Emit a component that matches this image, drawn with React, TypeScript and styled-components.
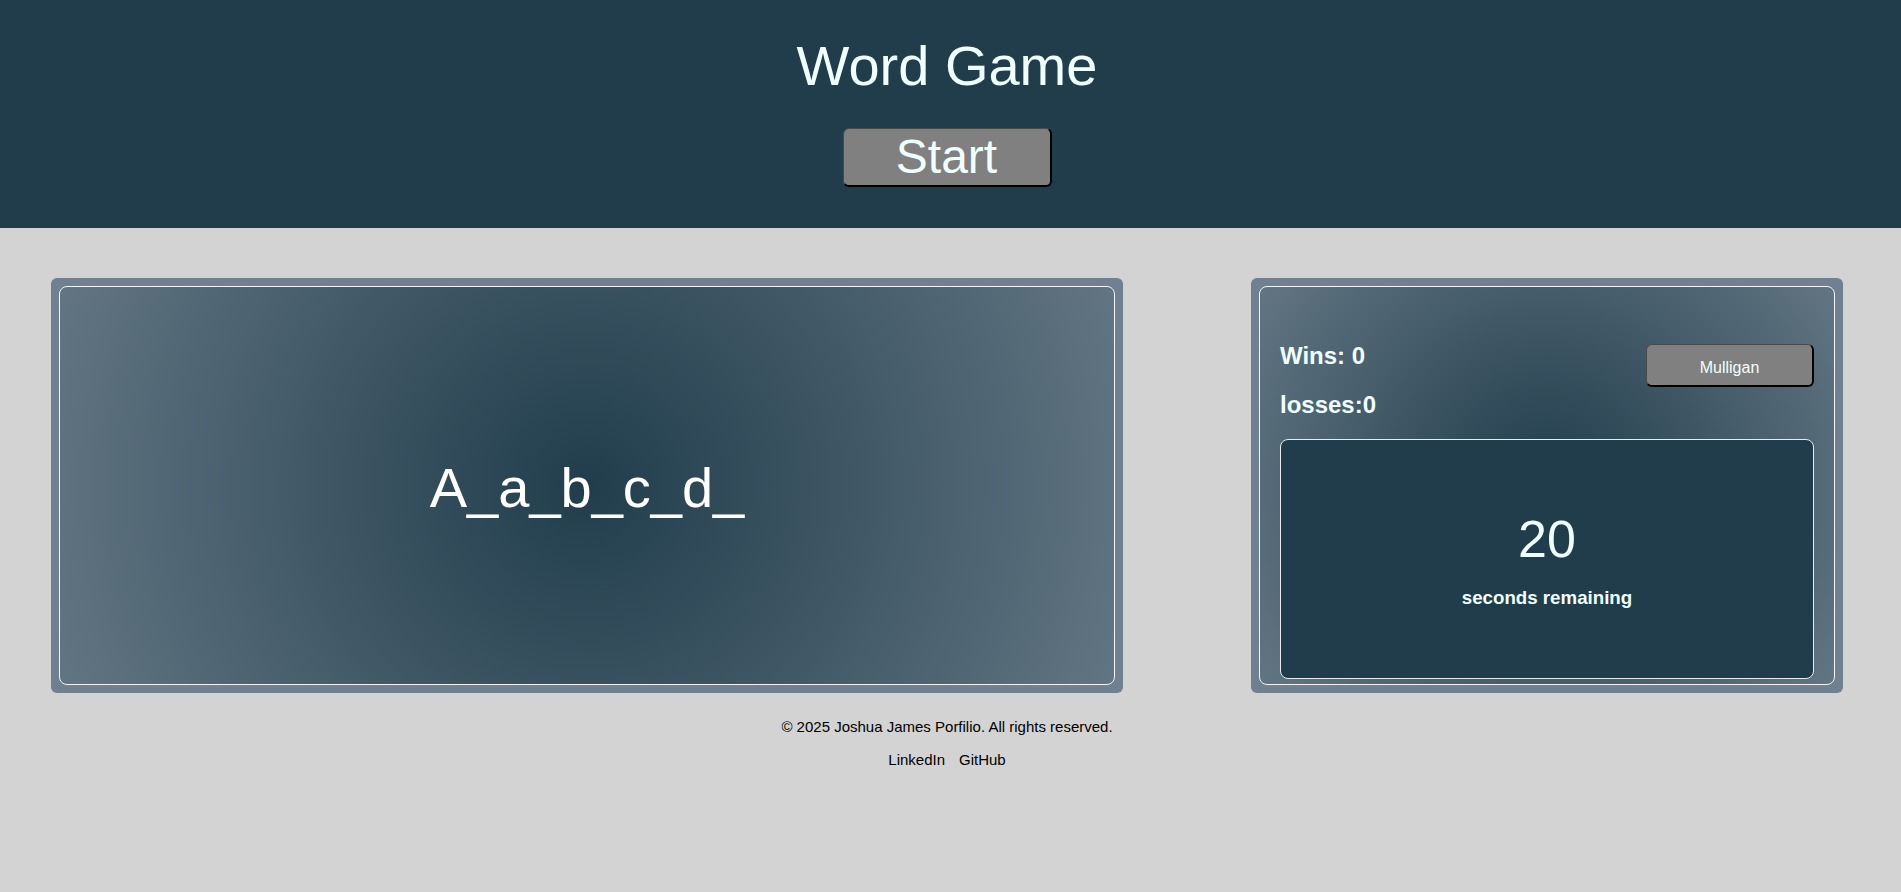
import React from "react";
import styled, { createGlobalStyle } from "styled-components";

const GlobalStyle = createGlobalStyle`
  html, body {
    margin: 0;
    padding: 0;
    background: #d3d3d3;
  }
  body {
    font-family: "Liberation Sans", Arial, sans-serif;
  }
`;

const Header = styled.header`
  background: #213d4c;
  height: 228px;
  box-sizing: border-box;
  padding: 34px 7px 0 0;
  display: flex;
  flex-direction: column;
  align-items: center;
`;

const Title = styled.h1`
  margin: 0;
  font-size: 56px;
  font-weight: normal;
  line-height: 64px;
  color: #f0ffff;
`;

const GrayButton = styled.button<{ $w: number; $h: number; $size: number; $shift?: number }>`
  width: ${(p) => p.$w}px;
  height: ${(p) => p.$h}px;
  box-sizing: border-box;
  background: #808080;
  color: #f0ffff;
  font-family: "Liberation Sans", Arial, sans-serif;
  font-size: ${(p) => p.$size}px;
  line-height: 1;
  border-style: solid;
  border-width: 1px 2px 2px 1px;
  border-color: #4a4a4a #000 #000 #4a4a4a;
  border-radius: 6px;
  padding: ${(p) => p.$shift ?? 0}px 0 0;
  cursor: pointer;
  display: flex;
  align-items: center;
  justify-content: center;
`;

const StartWrap = styled.div`
  margin-top: 30px;
`;

const Main = styled.main`
  display: flex;
  justify-content: space-between;
  padding: 50px 51px 0;
  margin-right: 7px;
`;

const Panel = styled.section<{ $w: number }>`
  width: ${(p) => p.$w}px;
  height: 415px;
  box-sizing: border-box;
  padding: 8px;
  background: #708090;
  border-radius: 6px;
  display: flex;
`;

const Inner = styled.div`
  flex: 1;
  border: 1px solid #f2f4f5;
  border-radius: 8px;
  background: radial-gradient(circle at center, #213d4c 0%, #627582 100%);
  display: flex;
  flex-direction: column;
`;

const WordInner = styled(Inner)`
  align-items: center;
  justify-content: center;
`;

const Word = styled.div`
  font-size: 56px;
  line-height: 64px;
  color: #ffffff;
  margin-top: 4px;
`;

const SideInner = styled(Inner)`
  padding: 55px 20px 5px;
`;

const StatsRow = styled.div`
  display: flex;
  justify-content: space-between;
  align-items: flex-start;
`;

const Stats = styled.div`
  display: flex;
  flex-direction: column;
  gap: 21px;
`;

const Stat = styled.h2`
  margin: 0;
  font-size: 24px;
  line-height: 28px;
  font-weight: bold;
  color: #f0ffff;
`;

const MulliganWrap = styled.div`
  margin-top: 2px;
`;

const Timer = styled.div`
  flex: 1;
  margin-top: 20px;
  background: #213d4c;
  border: 1px solid #e8ecee;
  border-radius: 8px;
  display: flex;
  flex-direction: column;
  align-items: center;
  justify-content: center;
  gap: 18px;
`;

const Seconds = styled.div`
  font-size: 52px;
  line-height: 60px;
  color: #f0ffff;
`;

const TimerLabel = styled.h3`
  margin: 0;
  font-size: 18.72px;
  line-height: 22px;
  font-weight: bold;
  color: #f0ffff;
`;

const Footer = styled.footer`
  margin-right: 7px;
  padding-top: 25px;
  display: flex;
  flex-direction: column;
  align-items: center;
  gap: 16px;
  font-size: 15px;
  line-height: 17px;
  color: #000;
`;

const Copy = styled.p`
  margin: 0;
`;

const Links = styled.nav`
  display: flex;
  gap: 14px;
`;

const FooterLink = styled.a`
  color: #000;
  text-decoration: none;
`;

export default function App() {
  return (
    <>
      <GlobalStyle />
      <Header>
        <Title>Word Game</Title>
        <StartWrap>
          <GrayButton $w={209} $h={59} $size={48}>
            Start
          </GrayButton>
        </StartWrap>
      </Header>
      <Main>
        <Panel $w={1072}>
          <WordInner>
            <Word>A_a_b_c_d_</Word>
          </WordInner>
        </Panel>
        <Panel $w={592}>
          <SideInner>
            <StatsRow>
              <Stats>
                <Stat>Wins: 0</Stat>
                <Stat>losses:0</Stat>
              </Stats>
              <MulliganWrap>
                <GrayButton $w={168} $h={43} $size={16} $shift={5}>
                  Mulligan
                </GrayButton>
              </MulliganWrap>
            </StatsRow>
            <Timer>
              <Seconds>20</Seconds>
              <TimerLabel>seconds remaining</TimerLabel>
            </Timer>
          </SideInner>
        </Panel>
      </Main>
      <Footer>
        <Copy>© 2025 Joshua James Porfilio. All rights reserved.</Copy>
        <Links>
          <FooterLink href="#">LinkedIn</FooterLink>
          <FooterLink href="#">GitHub</FooterLink>
        </Links>
      </Footer>
    </>
  );
}
